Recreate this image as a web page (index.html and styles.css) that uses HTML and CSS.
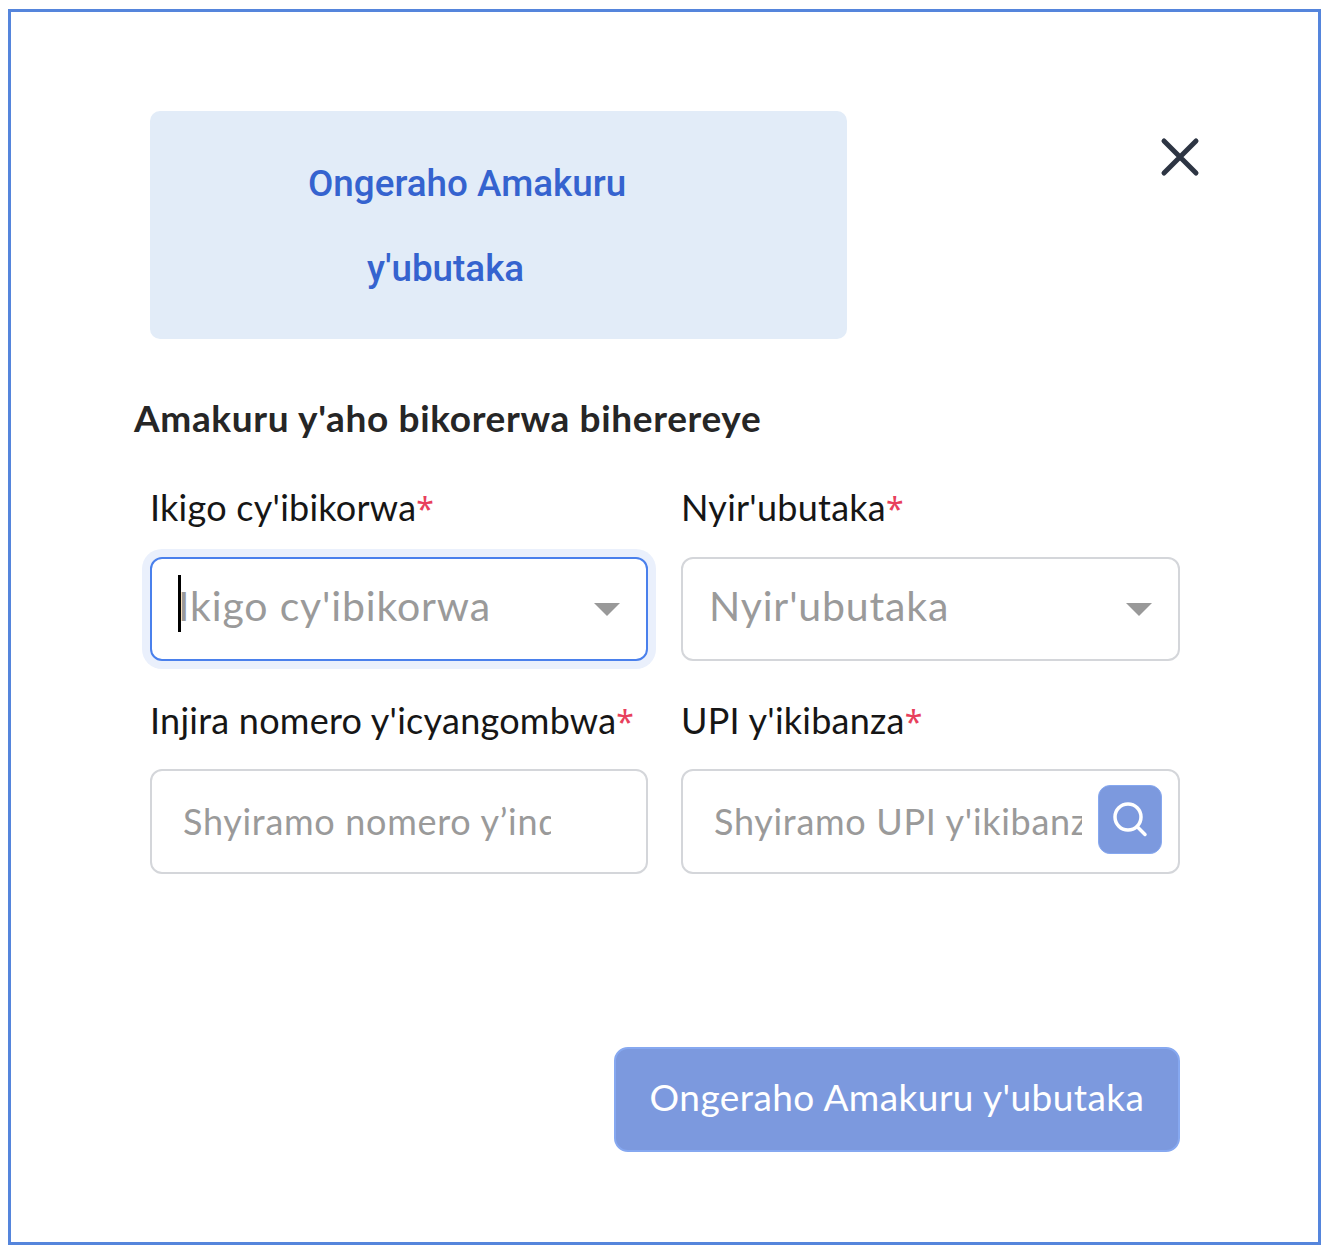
FILE: index.html
```html
<!DOCTYPE html>
<html lang="en">
<head>
    <meta charset="UTF-8">
    <meta name="viewport" content="width=device-width, initial-scale=1.0">
    <title>Ongeraho Amakuru y'ubutaka</title>
    <link rel="stylesheet" href="styles.css">
</head>
<body>

<div class="modal">
    <div class="modal-top">
        <div class="title-box">
            <span class="title-line first">Ongeraho Amakuru</span>
            <span class="title-line second">y'ubutaka</span>
        </div>
        <button class="close-btn" aria-label="Close">
            <svg width="40" height="40" viewBox="0 0 40 40" fill="none" stroke="#2d3543" stroke-width="5" stroke-linecap="round">
                <path d="M4 4L36 36M36 4L4 36"/>
            </svg>
        </button>
    </div>

    <h2 class="section-title">Amakuru y'aho bikorerwa biherereye</h2>

    <div class="form-grid">
        <div class="field">
            <label>Ikigo cy'ibikorwa<span class="req">*</span></label>
            <div class="select focused">
                <span class="caret"></span>
                <span class="select-text">Ikigo cy'ibikorwa</span>
                <span class="arrow"></span>
            </div>
        </div>
        <div class="field">
            <label>Nyir'ubutaka<span class="req">*</span></label>
            <div class="select">
                <span class="select-text">Nyir'ubutaka</span>
                <span class="arrow"></span>
            </div>
        </div>
        <div class="field">
            <label>Injira nomero y'icyangombwa<span class="req">*</span></label>
            <div class="text-input">
                <input type="text" class="nid-input" placeholder="Shyiramo nomero y’indangamuntu">
            </div>
        </div>
        <div class="field">
            <label>UPI y'ikibanza<span class="req">*</span></label>
            <div class="text-input">
                <input type="text" class="upi-input" placeholder="Shyiramo UPI y'ikibanza">
                <button class="search-btn" aria-label="Search">
                    <svg width="36" height="36" viewBox="0 0 36 36" fill="none" stroke="#fff" stroke-width="3.500" stroke-linecap="round">
                        <circle cx="16" cy="15" r="13"/>
                        <path d="M26 25.500L33 32.500"/>
                    </svg>
                </button>
            </div>
        </div>
    </div>

    <div class="actions">
        <button class="submit-btn">Ongeraho Amakuru y'ubutaka</button>
    </div>
</div>

</body>
</html>
```

FILE: styles.css
```css
* {
    box-sizing: border-box;
}
body {
    margin: 0;
    padding: 9px 11px 7px 8px;
    background-color: #fff;
    font-family: Lato, "Noto Sans", Arial, sans-serif;
}
.modal {
    height: 1236px;
    border: 3px solid #5585dc;
    padding: 99px 138px 0 123px;
}
.modal-top {
    display: flex;
    align-items: flex-start;
    justify-content: space-between;
    padding-left: 16px;
}
.title-box {
    width: 697px;
    height: 228px;
    padding-top: 30px;
    background: #e2ecf8;
    border-radius: 10px;
}
.title-line {
    display: block;
    font-family: Roboto, Arial, sans-serif;
    font-weight: 500;
    font-size: 36.800px;
    line-height: 85px;
    color: #3563cf;
}
.first {
    margin-left: 158px;
}
.second {
    margin-left: 217px;
}
.close-btn {
    margin-top: 26px;
    margin-right: -20px;
    padding: 0;
    border: none;
    background: none;
    line-height: 0;
}
.section-title {
    margin: 55px 0 0;
    font-size: 37px;
    line-height: 48px;
    font-weight: 700;
    letter-spacing: 0.650px;
    color: #262626;
    white-space: nowrap;
}
.form-grid {
    display: grid;
    grid-template-columns: 498px 499px;
    column-gap: 33px;
    row-gap: 35px;
    margin-top: 41px;
    margin-left: 16px;
}
.field label {
    display: block;
    font-size: 36px;
    line-height: 48px;
    letter-spacing: 0.250px;
    color: #161616;
    margin-bottom: 26px;
    white-space: nowrap;
}
.field:nth-child(n+3) label {
    margin-bottom: 25px;
}
.req {
    font-family: "Noto Sans", sans-serif;
    font-size: 32px;
    line-height: 1;
    color: #e8405c;
}
.select, .text-input {
    position: relative;
    display: flex;
    align-items: center;
    height: 104px;
    background: #fff;
    border: 2px solid #d4d6da;
    border-radius: 12px;
}
.select {
    padding: 0 26px;
}
.focused {
    border-color: #4a80ec;
    box-shadow: 0 0 0 8px #eaf0fc;
}
.select-text {
    flex: 1;
    padding-bottom: 8px;
    font-size: 41px;
    letter-spacing: 0.850px;
    color: #9a9a9a;
}
.caret {
    position: absolute;
    left: 26px;
    top: 16px;
    width: 3px;
    height: 57px;
    background: #000;
}
.arrow {
    width: 0;
    height: 0;
    border-left: 13px solid transparent;
    border-right: 13px solid transparent;
    border-top: 13px solid #999;
}
.text-input {
    height: 105px;
    padding-left: 31px;
}
.text-input input {
    height: 60px;
    padding: 0 0 2px;
    border: none;
    outline: none;
    background: none;
    font-family: inherit;
    font-size: 36px;
    letter-spacing: 0.700px;
}
.text-input input::placeholder {
    color: #9a9a9a;
    opacity: 1;
}
.nid-input {
    width: 368px;
}
.upi-input {
    width: 368px;
}
.search-btn {
    position: absolute;
    right: 16px;
    top: 14px;
    width: 64px;
    height: 69px;
    padding: 0;
    display: flex;
    align-items: center;
    justify-content: center;
    background: #7c99de;
    border: 1px solid #86a8f0;
    border-radius: 12px;
}
.actions {
    display: flex;
    justify-content: flex-end;
    margin-top: 173px;
}
.submit-btn {
    width: 566px;
    height: 105px;
    padding-bottom: 8px;
    background: #7c99de;
    border: 2px solid #86a8f0;
    border-radius: 14px;
    color: #fff;
    font-family: inherit;
    font-size: 37px;
    letter-spacing: 0.450px;
}
```
